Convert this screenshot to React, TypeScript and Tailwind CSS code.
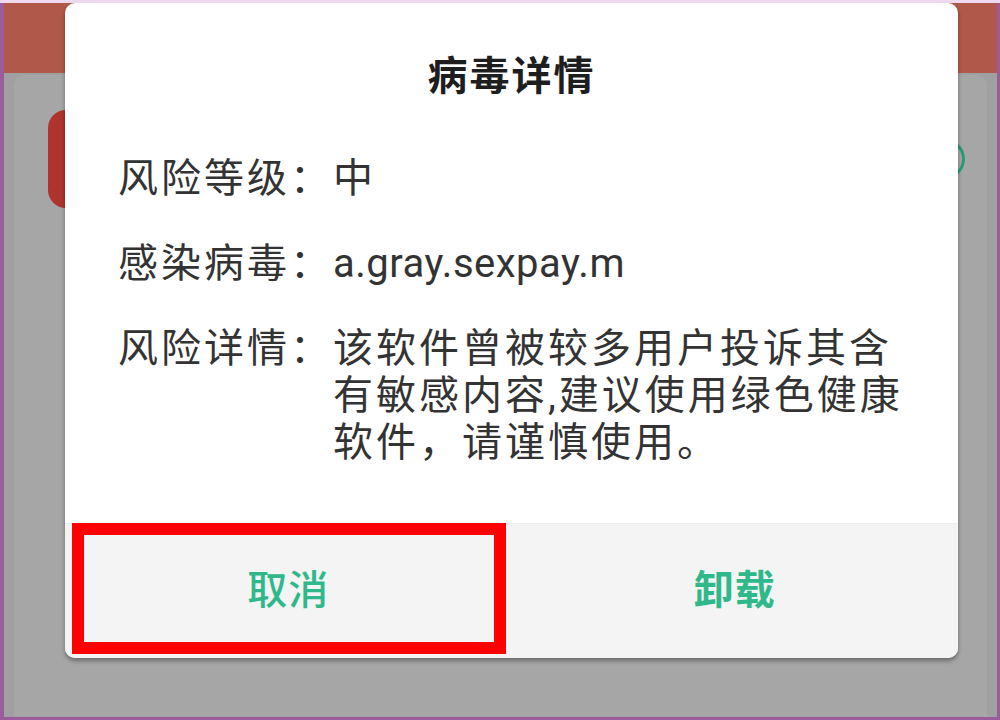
import React from "react";

const cjk = { fontFamily: 'Roboto, "Noto Sans CJK SC", sans-serif' };

function Row({ label, lines }: { label: string; lines: React.ReactNode[] }) {
  return (
    <div className="flex">
      <div className="shrink-0 tracking-[3px]">{label}</div>
      <div className="flex flex-col">
        {lines.map((l, i) => (
          <div key={i} className="tracking-[3px] whitespace-nowrap">
            {l}
          </div>
        ))}
      </div>
    </div>
  );
}

export default function App() {
  return (
    <div
      className="relative w-[1000px] h-[720px] overflow-hidden bg-[#9b5c9b] flex flex-col"
      style={cjk}
    >
      <div className="h-[3px] bg-[#eed9f1] shrink-0" />
      <div className="flex flex-1 min-h-0">
        <div className="w-[4px] shrink-0" />
        <div className="flex-1 flex flex-col">
          <div className="h-[70px] shrink-0 bg-[#b0594a]" />
          <div className="flex-1 bg-[#a0a0a0] pl-[10px] pr-[10px] pt-[2px] flex flex-col">
            <div className="flex-1 rounded-tl-[10px] rounded-tr-[10px] bg-[#a6a6a6] pl-[34px] pr-[22px] pt-[35px] flex justify-between items-start">
              <div className="w-[200px] h-[98px] rounded-[18px] bg-[#b0342e]" />
              <div className="mt-[29px] w-[40px] h-[40px] rounded-full border-[3px] border-[#2a9b78]" />
            </div>
          </div>
        </div>
        <div className="w-[3px] shrink-0" />
      </div>
      <div className="h-[3px] bg-[#9b5c9b] shrink-0" />

      {/* dialog */}
      <div className="absolute left-[65px] top-[3px] w-[893px] h-[655px] rounded-[10px] bg-white shadow-[0_3px_4px_rgba(0,0,0,0.35)] flex flex-col overflow-hidden">
        <div className="pt-[50px] text-center text-[40px] leading-[47px] font-bold tracking-[2px] text-[#1e1e1e]">
          病毒详情
        </div>
        <div className="mt-[55px] pl-[53px] flex flex-col gap-[38px] text-[40px] leading-[47px] text-[#333333]">
          <Row label="风险等级：" lines={["中"]} />
          <Row
            label="感染病毒："
            lines={[<span className="tracking-[0.5px]">a.gray.sexpay.m</span>]}
          />
          <Row
            label="风险详情："
            lines={[
              "该软件曾被较多用户投诉其含",
              "有敏感内容,建议使用绿色健康",
              "软件，请谨慎使用。",
            ]}
          />
        </div>
        <div className="mt-auto h-[135px] shrink-0 flex bg-[#f4f4f4] border-t border-[#ececec] text-[40px] text-[#2fb98a]">
          <div className="flex-1 flex items-center justify-center font-medium tracking-[1px]">
            取消
          </div>
          <div className="flex-1 flex items-center justify-center font-bold tracking-[1px]">
            卸载
          </div>
        </div>
        <div className="absolute left-[7px] top-[520px] w-[434px] h-[131px] border-[12px] border-[#ff0000]" />
      </div>
    </div>
  );
}
